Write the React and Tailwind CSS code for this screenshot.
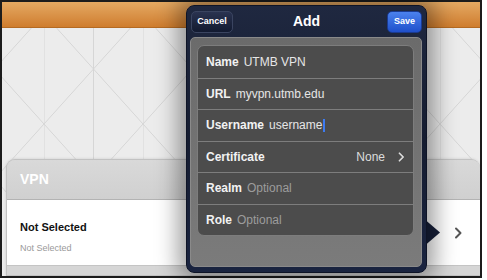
import React from 'react';

const rows = [
  { label: 'Name', value: 'UTMB VPN' },
  { label: 'URL', value: 'myvpn.utmb.edu' },
  { label: 'Username', value: 'username', cursor: true },
  { label: 'Certificate', right: 'None' },
  { label: 'Realm', placeholder: 'Optional' },
  { label: 'Role', placeholder: 'Optional' },
];

const Lattice = () => (
  <svg className="absolute inset-0 w-full h-full" xmlns="http://www.w3.org/2000/svg">
    <defs>
      <pattern id="lattice" x="42" y="12" width="99" height="110" patternUnits="userSpaceOnUse">
        <path d="M0 0V110M49.5 0V110M0 0L99 110M99 0L0 110" stroke="#d6d6d6" strokeWidth="1" fill="none" />
      </pattern>
    </defs>
    <rect width="100%" height="100%" fill="#ececec" />
    <rect width="100%" height="100%" fill="url(#lattice)" />
  </svg>
);

const Chevron = ({ className, color }) => (
  <svg className={className} viewBox="0 0 8 12" fill="none">
    <path d="M1.5 1.5L6 6L1.5 10.5" stroke={color} strokeWidth="2" strokeLinecap="round" strokeLinejoin="round" />
  </svg>
);

export default function App() {
  return (
    <div className="relative w-[487px] h-[280px] bg-white overflow-hidden font-['Liberation_Sans',Arial,sans-serif]">
      {/* Background screen */}
      <div className="relative w-[482px] h-[278px] border-2 border-[#1c1c1c] overflow-hidden flex flex-col">
        <Lattice />
        <div className="relative h-[26px] bg-gradient-to-b from-[#e4a962] to-[#cf7d2d] border-b border-[#b46a22]" />
        <div className="flex-1" />

        {/* VPN panel */}
        <div className="relative ml-[4px] h-[117px] flex flex-col rounded-t-[9px] border border-[#c2c2c2] border-r-0 bg-[#d8d8d8] shadow-[0_0_3px_rgba(0,0,0,0.15)] overflow-hidden">
          <div className="h-[40px] flex items-center pl-[13px] bg-gradient-to-b from-[#d9d9d9] to-[#d0d0d0] border-b border-[#b3b3b3]">
            <span className="text-[14px] font-bold text-white">VPN</span>
          </div>
          <div className="h-[66px] bg-white border-b border-[#c4c4c4] flex items-center">
            <div className="flex flex-col pl-[13px] flex-1 mt-[10px]">
              <span className="text-[11px] font-bold text-[#111] leading-none">Not Selected</span>
              <span className="text-[9px] text-[#9a9a9a] leading-none mt-[11px]">Not Selected</span>
            </div>
            <Chevron className="w-[9px] h-[12px] mr-[17px]" color="#555" />
          </div>
          <div className="flex-1 bg-[#d6d6d6]" />
        </div>
      </div>

      {/* Popover arrow */}
      <svg className="absolute left-[422px] top-[217px] w-[19px] h-[31px]" viewBox="0 0 19 31">
        <path d="M0 0L18 15.5L0 31Z" fill="#17203a" />
      </svg>

      {/* Popover */}
      <div className="absolute left-[186px] top-[5px] w-[241px] h-[268px] rounded-[8px] bg-gradient-to-b from-[#1f2840] via-[#151c30] to-[#1a2440] border border-[#0e1426] shadow-[0_0_22px_8px_rgba(0,0,0,0.38)] flex flex-col">
        <div className="relative h-[31px] flex items-center justify-between px-[4px] shrink-0">
          <button className="w-[42px] h-[22px] rounded-[5px] bg-gradient-to-b from-[#2a3350] to-[#121a30] border border-[#3a4460] text-white text-[9px] font-bold">
            Cancel
          </button>
          <span className="absolute left-0 right-0 text-center text-[14px] font-bold text-white pointer-events-none">Add</span>
          <button className="w-[35px] h-[22px] rounded-[5px] bg-gradient-to-b from-[#4b82ee] to-[#1f4fcb] border border-[#1a3a90] text-white text-[9px] font-bold">
            Save
          </button>
        </div>
        <div className="flex-1 mx-[3px] mr-[4px] mb-[5px] rounded-[5px] bg-gradient-to-b from-[#6b6b6b] to-[#7b7b7b] border border-[#8a8a8a] pt-[7px] pl-[6px] pr-[7px]">
          <div className="rounded-[7px] border border-[#7d7d7d] bg-[#4c4c4c] overflow-hidden">
            {rows.map((row, i) => (
              <div
                key={row.label}
                className={`h-[31.5px] flex items-center pl-[8px] pr-[8px] text-[12px] ${i > 0 ? 'border-t border-[#7d7d7d]' : ''}`}
              >
                <span className="font-bold text-[#f2f2f2]">{row.label}</span>
                {row.value && <span className="ml-[5px] text-[#e6e6e6]">{row.value}</span>}
                {row.cursor && <span className="ml-[1px] w-[1.5px] h-[13px] bg-[#3d7bf0]" />}
                {row.placeholder && <span className="ml-[5px] text-[#9c9c9c]">{row.placeholder}</span>}
                {row.right && (
                  <span className="ml-auto flex items-center text-[#dcdcdc]">
                    {row.right}
                    <Chevron className="w-[7px] h-[10px] ml-[13px]" color="#dcdcdc" />
                  </span>
                )}
              </div>
            ))}
          </div>
        </div>
      </div>
    </div>
  );
}
